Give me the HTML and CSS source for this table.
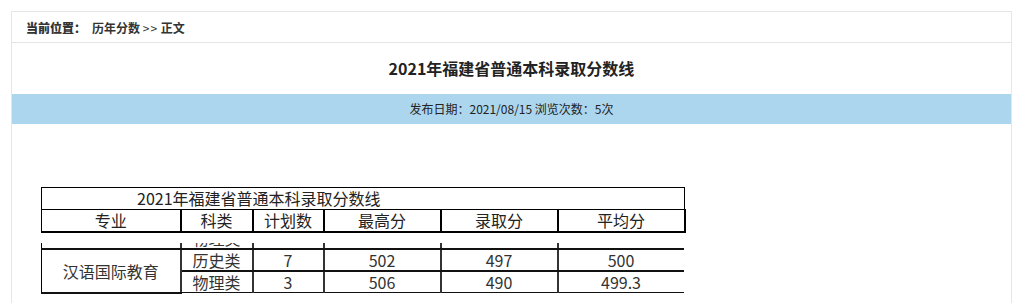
FILE: index.html
```html
<!DOCTYPE html>
<html lang="zh">
<head>
<meta charset="utf-8">
<title>2021年福建省普通本科录取分数线</title>
<link rel="stylesheet" href="styles.css">
</head>
<body>
<div class="card">
  <div class="crumb"><b>当前位置：</b><span class="path">历年分数 <span class="sep">&gt;&gt;</span> 正文</span></div>
  <h1 class="title">2021年福建省普通本科录取分数线</h1>
  <div class="meta">发布日期：2021/08/15 浏览次数：5次</div>
  <div class="content">
    <table class="grid head">
      <colgroup><col class="c1"><col class="c2"><col class="c3"><col class="c4"><col class="c5"><col class="c6"></colgroup>
      <tr class="caption-row"><td colspan="6" class="cap">2021年福建省普通本科录取分数线</td></tr>
      <tr class="hdr"><td>专业</td><td>科类</td><td>计划数</td><td>最高分</td><td>录取分</td><td>平均分</td></tr>
    </table>
    <div class="clip">
      <table class="grid body">
        <colgroup><col class="c1"><col class="c2"><col class="c3"><col class="c4"><col class="c5"><col class="c6"></colgroup>
        <tr class="prev"><td></td><td>物理类</td><td></td><td></td><td></td><td></td></tr>
        <tr><td rowspan="2" class="major">汉语国际教育</td><td>历史类</td><td>7</td><td>502</td><td>497</td><td>500</td></tr>
        <tr><td>物理类</td><td>3</td><td>506</td><td>490</td><td>499.3</td></tr>
      </table>
    </div>
  </div>
</div>
</body>
</html>
```
FILE: styles.css
```css
html, body {
  margin: 0;
  padding: 0;
  background: #fff;
}
body {
  padding: 11px 10px 0 11px;
  font-family: "Noto Sans CJK SC", "Noto Sans", sans-serif;
  color: #333;
}
.card {
  border: 1px solid #e6e6e6;
  min-height: 300px;
  box-sizing: border-box;
}
.crumb {
  height: 30px;
  line-height: 32px;
  padding-left: 14px;
  font-size: 12px;
  font-weight: bold;
  color: #333;
  border-bottom: 1px solid #e4e4e4;
  white-space: nowrap;
}
.crumb b { margin-right: 6px; }
.sep { font-weight: normal; letter-spacing: 1px; }
.title {
  margin: 0;
  height: 51px;
  line-height: 51px;
  text-align: center;
  font-size: 16px;
  font-weight: bold;
  color: #222;
}
.meta {
  height: 30px;
  line-height: 30px;
  background: #acd5ee;
  text-align: center;
  font-size: 12px;
  color: #222;
}
.content {
  padding: 63px 0 0 29px;
}
.grid {
  border-collapse: collapse;
  table-layout: fixed;
  width: 643px;
  font-size: 16px;
  color: #222;
}
.grid td {
  padding: 0;
  text-align: center;
  white-space: nowrap;
  overflow: hidden;
}
.c1 { width: 139px; }
.c2 { width: 72px; }
.c3 { width: 71px; }
.c4 { width: 117px; }
.c5 { width: 117px; }
.c6 { width: 127px; }

.head { border: 1px solid #000; }
.head td {
  border: 1px solid #000;
  height: 21px;
  line-height: 21px;
}
.head .cap {
  text-align: left;
  padding-left: 95px;
  border-bottom-width: 1px;
}
.head .hdr td {
  border-left-width: 2px;
  border-right-width: 2px;
  border-bottom-width: 2px;
}
.head .hdr td:first-child { border-left-width: 1px; }

.clip {
  margin-top: 10px;
  height: 51px;
  width: 643px;
  overflow: hidden;
}
.body {
  margin-top: -17px;
  border-left: 1px solid #000;
  border-right: 2px solid #555;
}
.body td {
  border-top: 2px solid #111;
  border-bottom: 2px solid #111;
  border-left: 2px solid #333;
  border-right: 2px solid #333;
  height: 20px;
  line-height: 20px;
  color: #333;
}
.body td:first-child { border-left: 1px solid #000; }
.body tr:last-child td { border-bottom-width: 1px; }
.body .major { vertical-align: middle; }
.body .prev td { height: 20px; }
```
